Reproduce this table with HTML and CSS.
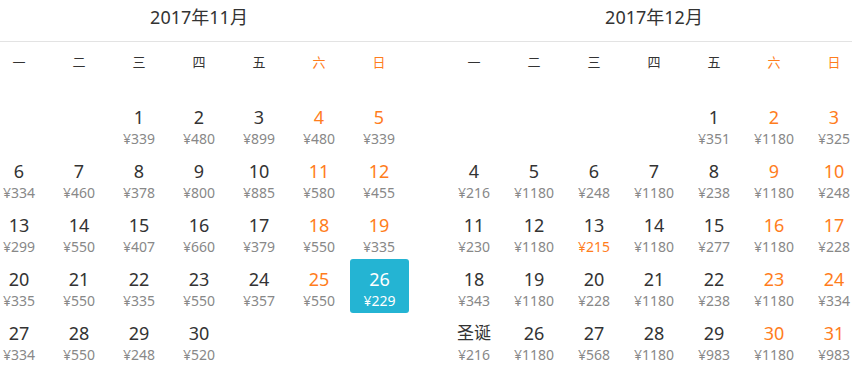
FILE: index.html
```html
<!DOCTYPE html>
<html lang="zh-CN">
<head>
<meta charset="utf-8">
<title>日历</title>
<link rel="stylesheet" href="styles.css">
</head>
<body>
<div class="cal">
  <section class="month month-left">
    <div class="title">2017年11月</div>
    <div class="week"><span>一</span><span>二</span><span>三</span><span>四</span><span>五</span><span class="we">六</span><span class="we">日</span></div>
    <div class="days">
      <div class="day empty"></div><div class="day empty"></div>
      <div class="day"><b>1</b><i>¥339</i></div>
      <div class="day"><b>2</b><i>¥480</i></div>
      <div class="day"><b>3</b><i>¥899</i></div>
      <div class="day we"><b>4</b><i>¥480</i></div>
      <div class="day we"><b>5</b><i>¥339</i></div>
      <div class="day"><b>6</b><i>¥334</i></div>
      <div class="day"><b>7</b><i>¥460</i></div>
      <div class="day"><b>8</b><i>¥378</i></div>
      <div class="day"><b>9</b><i>¥800</i></div>
      <div class="day"><b>10</b><i>¥885</i></div>
      <div class="day we"><b>11</b><i>¥580</i></div>
      <div class="day we"><b>12</b><i>¥455</i></div>
      <div class="day"><b>13</b><i>¥299</i></div>
      <div class="day"><b>14</b><i>¥550</i></div>
      <div class="day"><b>15</b><i>¥407</i></div>
      <div class="day"><b>16</b><i>¥660</i></div>
      <div class="day"><b>17</b><i>¥379</i></div>
      <div class="day we"><b>18</b><i>¥550</i></div>
      <div class="day we"><b>19</b><i>¥335</i></div>
      <div class="day"><b>20</b><i>¥335</i></div>
      <div class="day"><b>21</b><i>¥550</i></div>
      <div class="day"><b>22</b><i>¥335</i></div>
      <div class="day"><b>23</b><i>¥550</i></div>
      <div class="day"><b>24</b><i>¥357</i></div>
      <div class="day we"><b>25</b><i>¥550</i></div>
      <div class="day we selected"><b>26</b><i>¥229</i></div>
      <div class="day"><b>27</b><i>¥334</i></div>
      <div class="day"><b>28</b><i>¥550</i></div>
      <div class="day"><b>29</b><i>¥248</i></div>
      <div class="day"><b>30</b><i>¥520</i></div>
    </div>
  </section>
  <section class="month month-right">
    <div class="title">2017年12月</div>
    <div class="week"><span>一</span><span>二</span><span>三</span><span>四</span><span>五</span><span class="we">六</span><span class="we">日</span></div>
    <div class="days">
      <div class="day empty"></div><div class="day empty"></div><div class="day empty"></div><div class="day empty"></div>
      <div class="day"><b>1</b><i>¥351</i></div>
      <div class="day we"><b>2</b><i>¥1180</i></div>
      <div class="day we"><b>3</b><i>¥325</i></div>
      <div class="day"><b>4</b><i>¥216</i></div>
      <div class="day"><b>5</b><i>¥1180</i></div>
      <div class="day"><b>6</b><i>¥248</i></div>
      <div class="day"><b>7</b><i>¥1180</i></div>
      <div class="day"><b>8</b><i>¥238</i></div>
      <div class="day we"><b>9</b><i>¥1180</i></div>
      <div class="day we"><b>10</b><i>¥248</i></div>
      <div class="day"><b>11</b><i>¥230</i></div>
      <div class="day"><b>12</b><i>¥1180</i></div>
      <div class="day"><b>13</b><i class="low">¥215</i></div>
      <div class="day"><b>14</b><i>¥1180</i></div>
      <div class="day"><b>15</b><i>¥277</i></div>
      <div class="day we"><b>16</b><i>¥1180</i></div>
      <div class="day we"><b>17</b><i>¥228</i></div>
      <div class="day"><b>18</b><i>¥343</i></div>
      <div class="day"><b>19</b><i>¥1180</i></div>
      <div class="day"><b>20</b><i>¥228</i></div>
      <div class="day"><b>21</b><i>¥1180</i></div>
      <div class="day"><b>22</b><i>¥238</i></div>
      <div class="day we"><b>23</b><i>¥1180</i></div>
      <div class="day we"><b>24</b><i>¥334</i></div>
      <div class="day"><b class="holiday">圣诞</b><i>¥216</i></div>
      <div class="day"><b>26</b><i>¥1180</i></div>
      <div class="day"><b>27</b><i>¥568</i></div>
      <div class="day"><b>28</b><i>¥1180</i></div>
      <div class="day"><b>29</b><i>¥983</i></div>
      <div class="day we"><b>30</b><i>¥1180</i></div>
      <div class="day we"><b>31</b><i>¥983</i></div>
    </div>
  </section>
</div>
</body>
</html>
```

FILE: styles.css
```css
html, body {
  margin: 0;
  padding: 0;
  overflow: hidden;
  background: #fff;
}
body {
  font-family: "Noto Sans", "Noto Sans CJK SC", sans-serif;
  color: #333;
}
.cal {
  display: flex;
  gap: 35px;
  margin-left: -11px;
}
.month {
  width: 420px;
  flex: none;
}
.title {
  height: 41px;
  line-height: 34px;
  font-size: 18px;
  text-align: center;
  border-bottom: 1px solid #e3e3e3;
  color: #333;
}
.month-left .title {
  margin-right: -17px;
  padding-right: 17px;
}
.month-right .title {
  margin-left: -18px;
  padding-left: 18px;
}
.week {
  display: grid;
  grid-template-columns: repeat(7, 60px);
  height: 40px;
  line-height: 40px;
  margin-bottom: 15px;
  font-size: 13px;
  text-align: center;
  color: #333;
}
.week .we {
  color: #ff7d1c;
}
.days {
  display: grid;
  grid-template-columns: repeat(7, 60px);
  grid-auto-rows: 54px;
}
.day {
  display: flex;
  flex-direction: column;
  align-items: center;
  padding-top: 9px;
  box-sizing: border-box;
  border-radius: 3px;
}
.day b {
  font-weight: normal;
  font-size: 18px;
  line-height: 22px;
  color: #333;
}
.day i {
  font-style: normal;
  font-size: 14px;
  line-height: 18px;
  margin-top: 2px;
  color: #888;
}
.day.we b {
  color: #ff7d1c;
}
.day i.low {
  color: #ff7d1c;
}
.day b.holiday {
  font-size: 17px;
}
.day.selected {
  background: #24b4d3;
  margin-left: 1px;
}
.day.selected b,
.day.selected i {
  color: #fff;
}
```
